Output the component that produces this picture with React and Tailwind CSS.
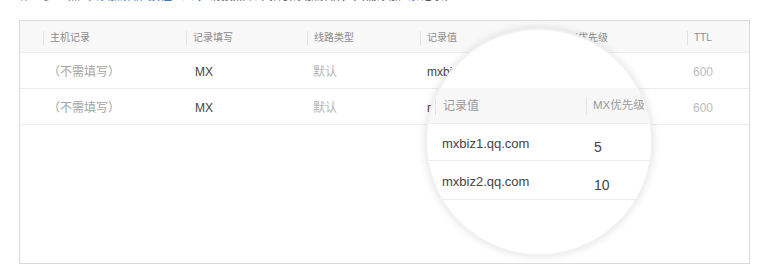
import React from "react";

const font = { fontFamily: '"Liberation Sans", "Noto Sans CJK SC", sans-serif' };

// column widths of the main table, measured from the first divider
const cols = [
  { key: "host", title: "主机记录", w: "w-[143px]" },
  { key: "type", title: "记录填写", w: "w-[121px]" },
  { key: "line", title: "线路类型", w: "w-[113px]" },
  { key: "value", title: "记录值", w: "w-[136px]" },
  { key: "prio", title: "MX优先级", w: "w-[131px]" },
  { key: "ttl", title: "TTL", w: "flex-1" },
];

const rows = [
  { host: "（不需填写）", type: "MX", line: "默认", value: "mxbiz1.qq.com", prio: "5", ttl: "600", h: "h-[37px]" },
  { host: "（不需填写）", type: "MX", line: "默认", value: "mxbiz2.qq.com", prio: "10", ttl: "600", h: "h-[39px]" },
];

function Divider({ className = "h-[14px]" }) {
  return <span className={`w-px bg-[#e2e2e2] ${className}`}></span>;
}

function Magnifier() {
  return (
    <div className="absolute left-[405px] top-[7px] w-[228px] h-[228px] rounded-full bg-white border-2 border-[#f1f1f1] shadow-[0_0_8px_rgba(0,0,0,0.12)] overflow-hidden">
      <div className="h-[58px]"></div>
      <div className="flex items-center h-[36px] pt-[1px] bg-[#f7f7f7] border-b border-[#ececec] pl-[8px] text-[12px] text-[#9a9a9a]">
        <Divider className="h-[18px]" />
        <span className="w-[150px] pl-[7px]">记录值</span>
        <Divider className="h-[18px]" />
        <span className="pl-[6px] text-[11.5px]">MX优先级</span>
      </div>
      {rows.map((r) => (
        <div key={r.value} className={`flex items-center ${r.h} pt-[4px] border-b border-[#ececec] pl-[15px] text-[#444]`}>
          <span className="w-[152px] text-[13px]">{r.value}</span>
          <span className="text-[14px] mt-[6px]">{r.prio}</span>
        </div>
      ))}
    </div>
  );
}

export default function App() {
  return (
    <div className="w-[768px] h-[279px] bg-white overflow-hidden" style={font}>
      {/* intro line, cut off by the top of the picture */}
      <div className="h-[3px] overflow-hidden pl-[20px]">
        <p className="-mt-[11px] text-[12px] leading-[14px] text-[#555] whitespace-nowrap">
          第三步：点击<span className="text-[#2f7ed8]">“添加解析”按钮（+）</span>，请按照以下指引添加解析，共需添加<span className="text-[#2f7ed8]">2条</span>记录。
        </p>
      </div>

      <div className="relative ml-[19px] mt-[17px] w-[731px] h-[244px] border border-[#dadada]">
        {/* header */}
        <div className="flex items-center h-[32px] pt-[2px] bg-[#f8f8f8] border-b border-[#ececec] pl-[23px] text-[10px] text-[#8c8c8c]">
          {cols.map((c) => (
            <div key={c.key} className={`flex items-center ${c.w}`}>
              <Divider />
              <span className="pl-[6px]">{c.title}</span>
            </div>
          ))}
        </div>

        {rows.map((r) => (
          <div key={r.value} className="flex items-center h-[36px] pt-[3px] border-b border-[#ececec] pl-[23px] text-[12px]">
            <div className="w-[143px] pl-[5px] text-[#a5a5a5]">{r.host}</div>
            <div className="w-[121px] pl-[9px] text-[#444]">{r.type}</div>
            <div className="w-[113px] pl-[6px] text-[#b5b5b5]">{r.line}</div>
            <div className="w-[136px] pl-[7px] text-[#444]">{r.value}</div>
            <div className="w-[131px] pl-[7px] text-[#444]">{r.prio}</div>
            <div className="flex-1 pl-[6px] text-[#bcbcbc]">{r.ttl}</div>
          </div>
        ))}

        <Magnifier />
      </div>
    </div>
  );
}
